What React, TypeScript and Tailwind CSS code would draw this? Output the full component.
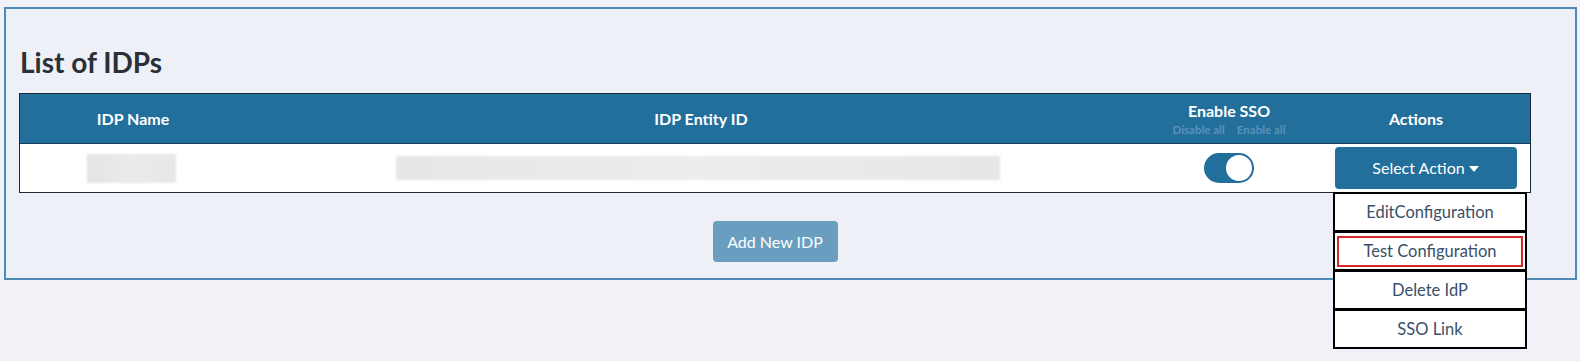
import { useState } from 'react';

// ─── Data ─────────────────────────────────────────────────────────────────────

const actions = ['EditConfiguration', 'Test Configuration', 'Delete IdP', 'SSO Link'];

// ─── Small pieces ─────────────────────────────────────────────────────────────

function Toggle({ on }: { on: boolean }) {
  return (
    <div
      className={
        on
          ? 'w-[50px] h-[30px] rounded-full bg-[#226f9c] flex items-center justify-end px-[2px]'
          : 'w-[50px] h-[30px] rounded-full bg-[#c9d3dd] flex items-center justify-start px-[2px]'
      }
    >
      <span className="w-[26px] h-[26px] rounded-full bg-white block" />
    </div>
  );
}

function ActionMenu() {
  const [open] = useState(true);
  return (
    <div className="relative flex justify-end pr-[13px]">
      <button className="w-[182px] h-[42px] rounded-[4px] bg-[#226f9c] text-white text-[16px] flex items-center justify-center gap-[3px]">
        Select Action
        <svg width="12" height="8" viewBox="0 0 12 8" className="mt-[1px]">
          <path d="M1 1h10L6 7z" fill="white" />
        </svg>
      </button>
      {open && (
        <div className="absolute top-[45px] right-[3px] w-[194px] flex flex-col">
          {actions.map((a, i) => (
            <div
              key={a}
              className="h-[40px] bg-white border-2 border-black -mt-[1px] first:mt-0 flex items-center justify-center text-[16.5px] text-[#3a5068]"
            >
              {i === 1 ? (
                <span className="w-[186px] h-[31px] border-2 border-[#d12b2b] flex items-center justify-center">
                  {a}
                </span>
              ) : (
                a
              )}
            </div>
          ))}
        </div>
      )}
    </div>
  );
}

// ─── Page ─────────────────────────────────────────────────────────────────────

export default function App() {
  return (
    <div
      className="w-[1580px] h-[361px] bg-[#f0f2f7] pt-[7px] pl-[4px] pr-[3px]"
      style={{ fontFamily: 'Lato, "Open Sans", sans-serif' }}
    >
      <div className="border-2 border-[#4f89b6] bg-[#edf0f7] pt-[37px] pb-[16px] pl-[13px]">
        <h2 className="text-[28px] leading-[33px] font-bold text-[#2b2f36] ml-[1px] mb-[14px]">List of IDPs</h2>

        <div className="w-[1512px] border border-[#1e2a36]">
          {/* Header */}
          <div className="grid grid-cols-[226px_910px_146px_1fr] h-[50px] bg-[#226f9c] text-white font-bold text-[16px] border-b border-[#173d58]">
            <div className="flex items-center justify-center">IDP Name</div>
            <div className="flex items-center justify-center">IDP Entity ID</div>
            <div className="flex flex-col items-center justify-center pt-[2px]">
              <span className="leading-[20px] text-[16px]">Enable SSO</span>
              <div className="flex gap-[12px] text-[11.5px] leading-[16px] text-[#5b92bb] mt-[1px] whitespace-nowrap">
                <span>Disable all</span>
                <span>Enable all</span>
              </div>
            </div>
            <div className="flex items-center justify-center pt-[1px]">Actions</div>
          </div>

          {/* Row */}
          <div className="grid grid-cols-[226px_910px_146px_1fr] h-[48px] bg-white items-center">
            <div className="flex justify-start pl-[67px]">
              <div className="w-[89px] h-[29px] bg-gradient-to-r from-[#e3e4e6] via-[#eaebed] to-[#e6e7e9] blur-[1px]" />
            </div>
            <div className="flex justify-start pl-[150px]">
              <div className="w-[604px] h-[24px] bg-gradient-to-r from-[#e6e7e9] via-[#ededee] to-[#e6e7e9] blur-[1px]" />
            </div>
            <div className="flex justify-center">
              <Toggle on />
            </div>
            <ActionMenu />
          </div>
        </div>

        <div className="w-[1512px] flex justify-center mt-[28px]">
          <button className="w-[125px] h-[41px] rounded-[4px] bg-[#6a9ec0] text-white text-[16px]">Add New IDP</button>
        </div>
      </div>
    </div>
  );
}
